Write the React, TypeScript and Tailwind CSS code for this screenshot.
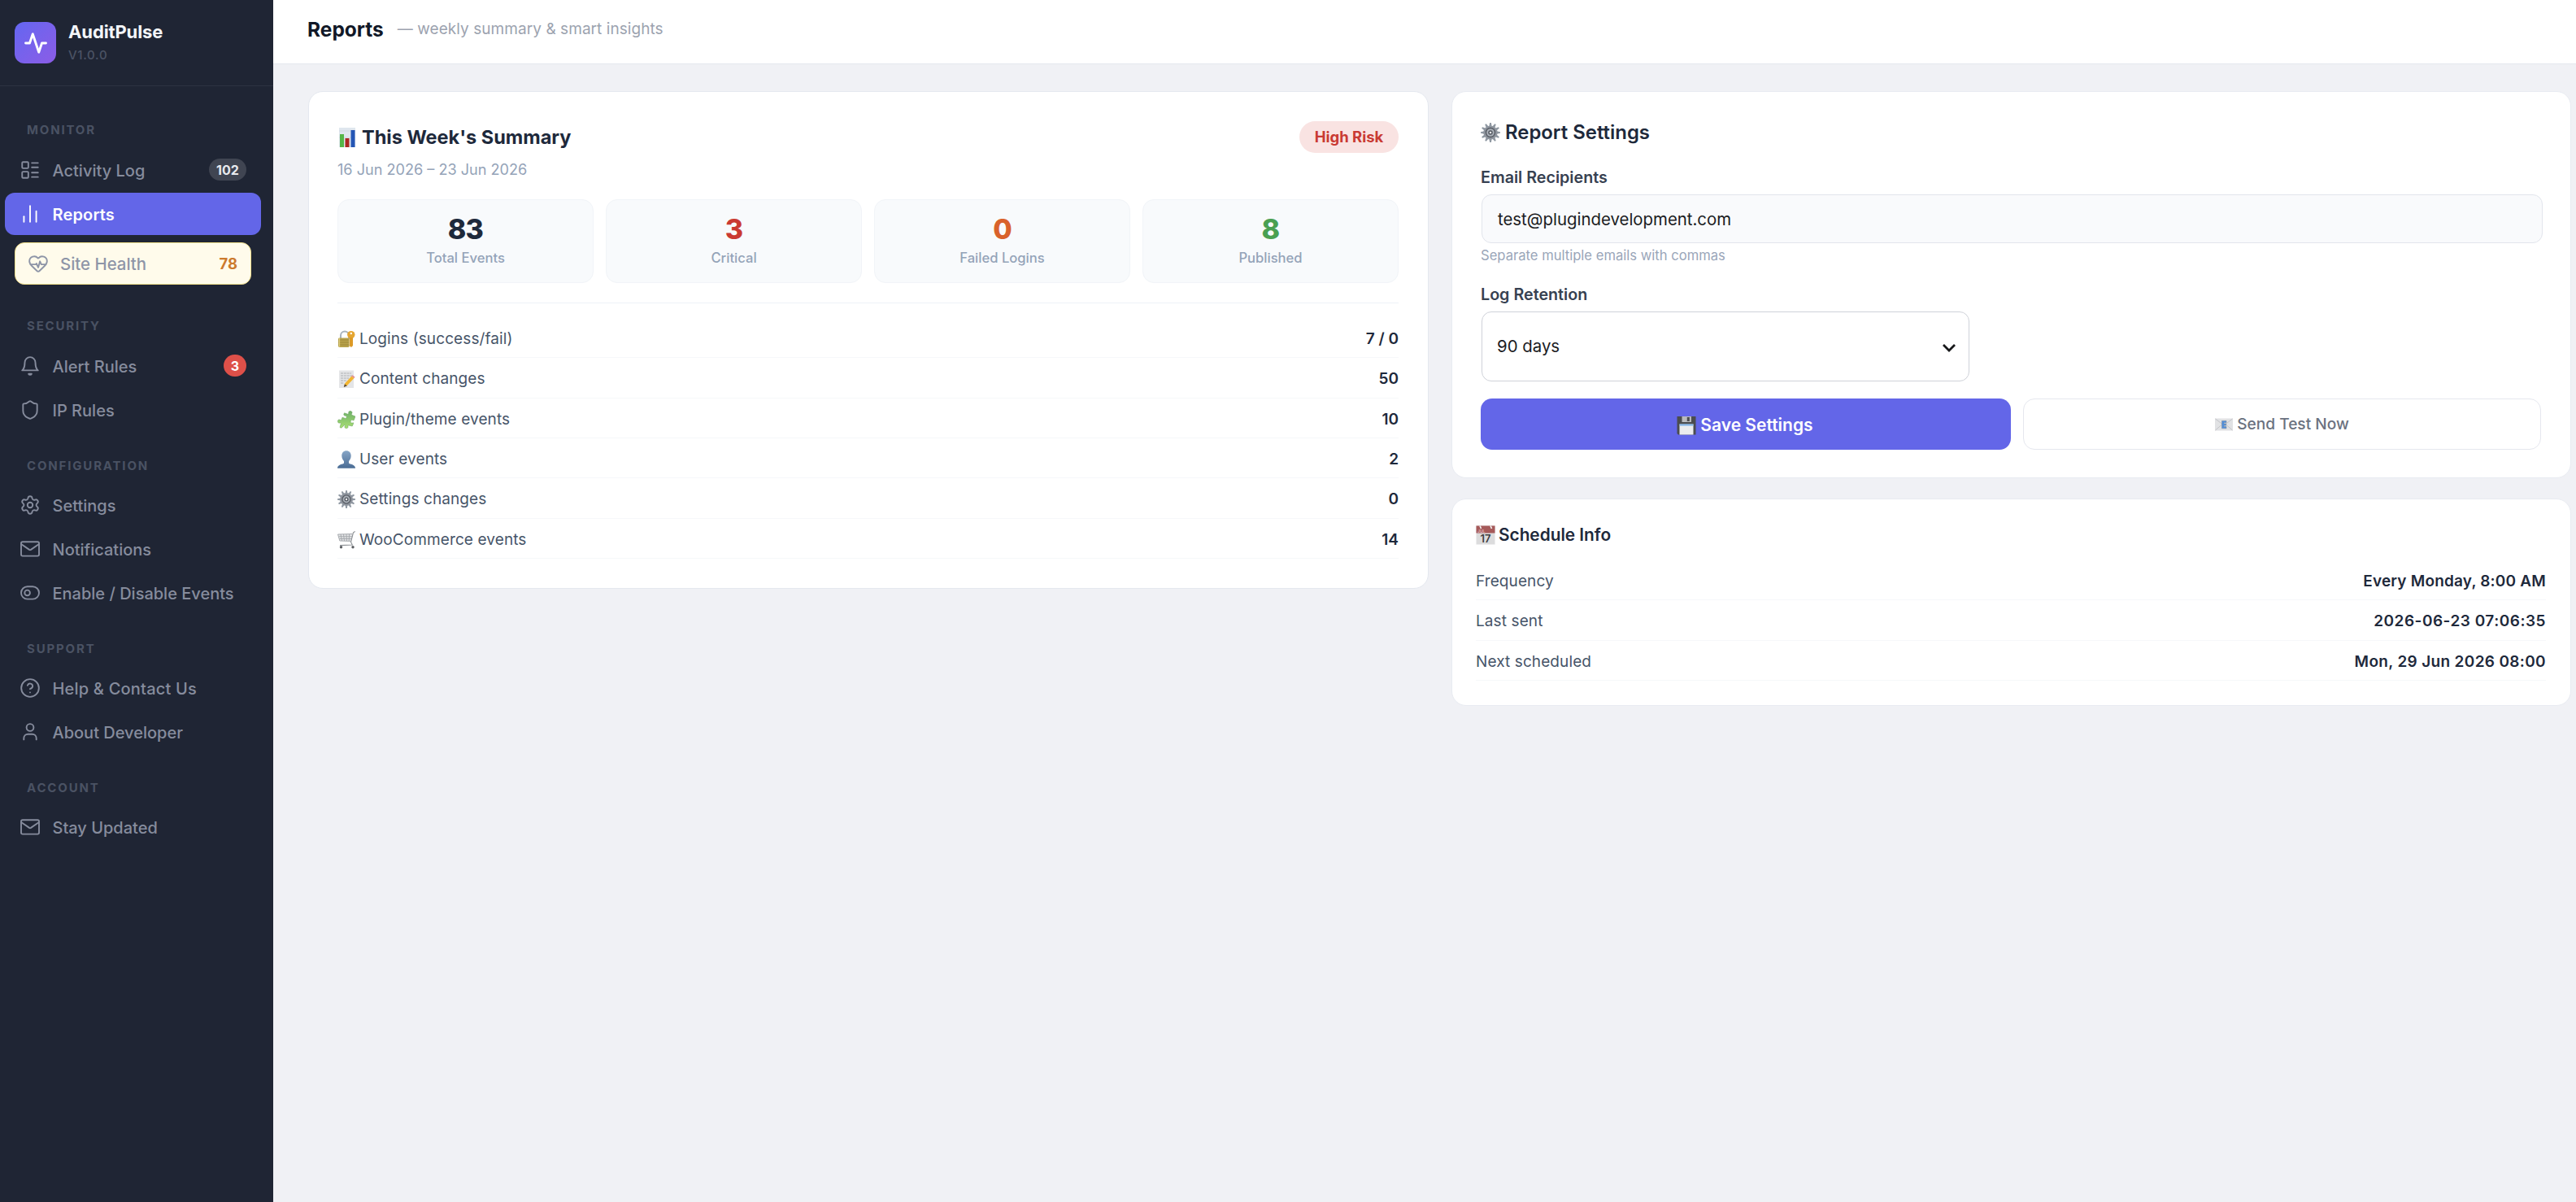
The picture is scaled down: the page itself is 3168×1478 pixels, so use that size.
import { ReactNode } from "react";
import clsx from "clsx";
import {
	ChartNoAxesColumn,
	HeartPulse,
	HelpCircle,
	LayoutList,
	Settings,
	Shield,
} from "lucide-react";

const lineIcon = {
	width: 26,
	height: 26,
	viewBox: "0 0 26 26",
	fill: "none",
	stroke: "currentColor",
	strokeWidth: 1.9,
	strokeLinecap: "round",
	strokeLinejoin: "round",
	className: "shrink-0",
} as const;

const lucideIcon = { size: 26, strokeWidth: 1.75, className: "shrink-0" };

function BellIcon() {
	return (
		<svg {...lineIcon} viewBox="0 0 24 24" strokeWidth={1.75}>
			<path d="M18 8A6 6 0 0 0 6 8c0 7-3 9-3 9h18s-3-2-3-9" />
			<path d="M13.73 21a2 2 0 0 1-3.46 0z" />
		</svg>
	);
}

function MailIcon() {
	return (
		<svg {...lineIcon}>
			<rect x="2" y="4.2" width="22" height="17.4" rx="1.8" />
			<path d="M2.4 7.2 12 13.9q1 .6 2 0l9.6-6.7" />
		</svg>
	);
}

function ToggleIcon() {
	return (
		<svg {...lineIcon}>
			<rect x="2" y="5.2" width="22" height="15.4" rx="7.7" />
			<circle cx="9.6" cy="12.9" r="3.3" />
		</svg>
	);
}

function UserIcon() {
	return (
		<svg {...lineIcon}>
			<circle cx="13" cy="7.5" r="4.4" />
			<path d="M5.3 22.4v-1.6a5 5 0 0 1 5-5h5.4a5 5 0 0 1 5 5v1.6" />
		</svg>
	);
}

function GearEmoji({ size = 22 }: Readonly<{ size?: number }>) {
	const teeth = Array.from({ length: 12 }, (_, i) => i * 30);
	return (
		<svg width={size} height={size} viewBox="0 0 22 22" className="shrink-0">
			{teeth.map((a) => (
				<path key={a} d="M10.2 0h1.6l.7 4h-3z" fill="#8f98a2" transform={`rotate(${a} 11 11)`} />
			))}
			<circle cx="11" cy="11" r="7.9" fill="#8f959e" />
			<circle cx="11" cy="11" r="5.7" fill="#565b63" />
			<circle cx="11" cy="11" r="4.4" fill="#a9afb7" />
			<circle cx="11" cy="11" r="2.5" fill="#51565e" />
			<circle cx="11" cy="11" r="1.2" fill="#eef0f3" />
		</svg>
	);
}

function ChartEmoji() {
	return (
		<svg width="24" height="24" viewBox="0 0 24 24" className="shrink-0">
			<rect x="2" width="20" height="24" fill="#dfe6ee" />
			<path d="M2 4h20M2 12h20" stroke="#cfd8e2" strokeWidth="1" />
			<rect x="3" y="8" width="5" height="16" fill="#55b548" />
			<rect x="9.5" y="13" width="5" height="11" fill="#ac2722" />
			<rect x="16.5" y="3" width="5" height="21" fill="#2456b5" />
		</svg>
	);
}

function LockEmoji() {
	return (
		<svg width="22" height="22" viewBox="0 0 22 22" className="shrink-0">
			<path d="M4 11V6.5a5 5 0 0 1 10 0V11" fill="none" stroke="#a9b4bd" strokeWidth="2" />
			<circle cx="16.8" cy="5.6" r="4.7" fill="#e5a631" />
			<path d="M15 9h4v10l-2 2-2-1.5z" fill="#dc9a27" />
			<circle cx="16.8" cy="4" r="1.2" fill="#fff" />
			<rect x="1" y="9.5" width="13.6" height="11.5" rx="1.4" fill="#b8a24b" />
			<path d="M1.5 12h12.6M1.5 15h12.6M1.5 18h12.6" stroke="#9b8637" strokeWidth=".9" />
			<path d="M2.5 10v10.5" stroke="#dccb7c" strokeWidth="1.2" />
		</svg>
	);
}

function MemoEmoji() {
	return (
		<svg width="22" height="22" viewBox="0 0 22 22" className="shrink-0">
			<rect x="2" y=".5" width="18" height="21.5" fill="#e4e5e7" />
			<path d="M4 4h13M4 7h14M4 10h10M4 13h7M4 16h4" stroke="#a7a9ad" strokeWidth=".9" strokeDasharray="3 .8" />
			<path d="m17.3 7.5 3.2 2.6-8.6 9-3.8 1.3 1-3.8z" fill="#f2b531" />
			<path d="m17.3 7.5 1.3-1.2 3 2.5-1.1 1.3z" fill="#e58a8f" />
			<path d="m8.9 17.2 3 2.4-4.1 1.4z" fill="#5b4a35" />
		</svg>
	);
}

function PuzzleEmoji() {
	return (
		<svg width="22" height="22" viewBox="0 0 22 22" className="shrink-0">
			<defs>
				<linearGradient id="puzzle" x1="0" y1="0" x2="0" y2="1">
					<stop offset="0" stopColor="#6fb069" />
					<stop offset="1" stopColor="#a8df72" />
				</linearGradient>
			</defs>
			<path
				d="M8.5 2.8 12.8 4.2C14.3 4.3 13.4 2.8 13.8 1.6 14.5-.2 18 .2 18 2.3c0 1.300-1.200 1.800-.4 3L22 7l-1.700 4.600c-1.100.9-1.800-.6-3.100-.2-1.700.8-1.300 3.300.4 3.700 1.200.2 1.700-.8 2.300.2L18.200 19l-4.500-1c-1.300.1-.4 1.400-.8 2.500-.8 1.900-3.900 1.500-4-.5 0-1.200 1.100-1.700.2-2.800L4.800 21.200 3 20.500l1.300-4.800c-.3-1.200-1.500-.2-2.600-.6-2.100-.8-1.800-3.900.3-4.200 1.200 0 1.700 1.200 2.700.5L6 8.200l3.700 1.200c1.500.1 2.200-2 .9-2.900-1.300-.5-2.700-.3-2.900-1.700z"
				fill="url(#puzzle)"
				stroke="#629c58"
				strokeWidth=".5"
			/>
		</svg>
	);
}

function PersonEmoji() {
	return (
		<svg width="22" height="22" viewBox="0 0 22 22" className="shrink-0">
			<defs>
				<linearGradient id="person" x1="0" y1="0" x2="0" y2="1">
					<stop offset="0" stopColor="#86a5c6" />
					<stop offset="1" stopColor="#4a6c94" />
				</linearGradient>
			</defs>
			<path
				d="M11 .3c3.5 0 5.7 2.5 5.7 6.1 0 3-1.3 5-2.7 6.6v2.6c1 1.5 8 1.3 8 6.2H0c0-4.9 7-4.7 8-6.2V13c-1.4-1.6-2.7-3.6-2.7-6.6C5.3 2.8 7.5.3 11 .3z"
				fill="url(#person)"
			/>
		</svg>
	);
}

function CartEmoji() {
	return (
		<svg width="22" height="22" viewBox="0 0 22 22" className="shrink-0" fill="none">
			<path d="M.5 4 18.5 3 16.5 12.5 2.8 12z" fill="#e3e4e6" />
			<path
				d="M.5 4 2.8 12l13.7.5M.5 4l18-.5M1.5 6.8h16.7M2.3 9.5h15M4 4l1.5 8M7.5 4l1 8M11 4l.4 8M14.5 4l-.3 8"
				stroke="#a2a5a9"
				strokeWidth=".9"
			/>
			<path d="M21.7.6 19.5 1.8 16.5 13.5 18.3 17 3 17.6" stroke="#8d9195" strokeWidth="1.1" />
			<circle cx="4.5" cy="19.8" r="1.7" fill="#5c5f63" />
			<circle cx="19" cy="19.8" r="1.7" fill="#5c5f63" />
		</svg>
	);
}

function FloppyEmoji() {
	return (
		<svg width="24" height="24" viewBox="0 0 24 24" className="shrink-0">
			<path d="M.5 1h23v22.5H2L.5 22z" fill="#4b4c4f" />
			<rect x="6.5" y="1" width="11.5" height="7" fill="#b9babd" />
			<rect x="12.8" y="2" width="3" height="5" fill="#4b4c4f" />
			<rect x="3.5" y="10.5" width="17" height="13" fill="#ececee" />
			<rect x="3.5" y="10.5" width="17" height="2" fill="#7fb2e8" />
		</svg>
	);
}

function EmailEmoji() {
	return (
		<svg width="22" height="16" viewBox="0 0 22 16" className="shrink-0">
			<rect y=".5" width="22" height="15" fill="#e1e2e4" />
			<path d="m.5 1 10.5 8L21.5 1M.5 15l8-7M21.5 15l-8-7" fill="none" stroke="#bfc1c5" strokeWidth=".9" />
			<path d="M8.5 3.5H14v2.3h-3V7h2.7v2.2H11v1.3h3v2.3H8.5z" fill="#4f8fdc" stroke="#7c8da3" strokeWidth=".6" />
		</svg>
	);
}

function CalendarEmoji() {
	return (
		<svg width="24" height="24" viewBox="0 0 24 24" className="shrink-0">
			<rect x=".5" y=".5" width="23" height="23" fill="#dcdcdd" />
			<rect x=".5" y=".5" width="23" height="9" fill="#a65a5a" />
			<path d="M5 .5 6.5 4M18 .5 19.5 4" stroke="#f3f3f3" strokeWidth="1.7" />
			<text x="2" y="8.6" fontSize="5" fill="#e2bcbc" fontFamily="Inter, sans-serif">
				JUL
			</text>
			<text x="12" y="21.3" fontSize="13" textAnchor="middle" fill="#3f3f41" fontFamily="Inter, sans-serif">
				17
			</text>
		</svg>
	);
}

type NavEntry = {
	label: string;
	icon: ReactNode;
	badge?: string;
	kind?: "active" | "health" | "alert";
};

const sections: { title: string; items: NavEntry[] }[] = [
	{
		title: "MONITOR",
		items: [
			{ label: "Activity Log", icon: <LayoutList {...lucideIcon} />, badge: "102" },
			{ label: "Reports", icon: <ChartNoAxesColumn {...lucideIcon} />, kind: "active" },
			{ label: "Site Health", icon: <HeartPulse {...lucideIcon} />, badge: "78", kind: "health" },
		],
	},
	{
		title: "SECURITY",
		items: [
			{ label: "Alert Rules", icon: <BellIcon />, badge: "3", kind: "alert" },
			{ label: "IP Rules", icon: <Shield {...lucideIcon} /> },
		],
	},
	{
		title: "CONFIGURATION",
		items: [
			{ label: "Settings", icon: <Settings {...lucideIcon} /> },
			{ label: "Notifications", icon: <MailIcon /> },
			{ label: "Enable / Disable Events", icon: <ToggleIcon /> },
		],
	},
	{
		title: "SUPPORT",
		items: [
			{ label: "Help & Contact Us", icon: <HelpCircle {...lucideIcon} /> },
			{ label: "About Developer", icon: <UserIcon /> },
		],
	},
	{
		title: "ACCOUNT",
		items: [{ label: "Stay Updated", icon: <MailIcon /> }],
	},
];

function NavItem({ label, icon, badge, kind }: Readonly<NavEntry>) {
	if (kind === "health") {
		return (
			<a className="mx-3 mt-[7px] mb-2 flex h-[52px] items-center gap-3.5 rounded-xl border border-[#f3e08c] bg-[#fffbeb] pr-4 pl-[15px] text-[#8e95a7]">
				{icon}
				<span className="pt-0.5 text-[20.4px] leading-6 font-medium">{label}</span>
				<span className="ml-auto text-[18.5px] leading-6 font-bold text-[#cc7a2d]">{badge}</span>
			</a>
		);
	}

	return (
		<a
			className={clsx(
				"flex items-center gap-3.5 rounded-xl px-[18px]",
				badge ? "h-[53px]" : "h-[52px]",
				kind === "active" ? "bg-[#6366e8] text-white" : "text-[#868c9d]"
			)}
		>
			{icon}
			<span
				className={clsx(
					"pt-[2px] pl-[0.5px] text-[20px] leading-6 whitespace-nowrap",
					kind === "active" ? "font-semibold tracking-[0.15px]" : "font-medium",
					label.startsWith("Help") && "tracking-[0.2px]"
				)}
			>
				{label}
			</span>
			{badge && (
				<span
					className={clsx(
						"ml-auto flex h-[27px] items-center justify-center rounded-full text-[16px] leading-none font-bold",
						kind === "alert" ? "w-7 bg-[#de5049] text-white" : "w-[46px] bg-[#404552] text-[#e8eaee]"
					)}
				>
					{badge}
				</span>
			)}
		</a>
	);
}

function Sidebar() {
	return (
		<aside className="w-[336px] shrink-0 bg-[#1f2534]">
			<div className="flex h-[106px] items-center gap-[15px] border-b border-[#2d3341] pl-[18px]">
				<div className="flex size-[51px] items-center justify-center rounded-xl bg-linear-to-br from-[#6366f1] to-[#8b5ce6]">
					<svg width="30" height="30" viewBox="0 0 24 24" fill="none" stroke="#fff" strokeWidth="2.3" strokeLinecap="round" strokeLinejoin="round">
						<polyline points="22 12 18 12 15 21 9 3 6 12 2 12" />
					</svg>
				</div>
				<div className="flex flex-col gap-1 pb-0.5">
					<span className="text-[22px] leading-7 font-bold tracking-[-0.12px] text-[#f3f5f9]">AuditPulse</span>
					<span className="text-[15px] leading-[22px] font-medium tracking-[0.7px] text-[#4b5364]">V1.0.0</span>
				</div>
			</div>
			<nav className="pt-[11px] pr-[15px] pl-1.5">
				{sections.map((section) => (
					<div key={section.title} className="flex flex-col gap-0.5">
						<h3 className="-mb-0.5 flex h-[65px] items-end pb-3 pl-[27px] text-[15px] leading-5 font-bold tracking-[1.83px] text-[#4a5263]">
							{section.title}
						</h3>
						{section.items.map((item) => (
							<NavItem key={item.label} {...item} />
						))}
					</div>
				))}
			</nav>
		</aside>
	);
}

const stats = [
	{ value: "83", label: "Total Events", color: "text-[#1e293b]" },
	{ value: "3", label: "Critical", color: "text-[#ca3a32]" },
	{ value: "0", label: "Failed Logins", color: "text-[#d9622b]" },
	{ value: "8", label: "Published", color: "text-[#4aa052]" },
];

const breakdown = [
	{ icon: <LockEmoji />, label: "Logins (success/fail)", value: "7 / 0" },
	{ icon: <MemoEmoji />, label: "Content changes", value: "50" },
	{ icon: <PuzzleEmoji />, label: "Plugin/theme events", value: "10" },
	{ icon: <PersonEmoji />, label: "User events", value: "2" },
	{ icon: <GearEmoji />, label: "Settings changes", value: "0" },
	{ icon: <CartEmoji />, label: "WooCommerce events", value: "14" },
];

const schedule = [
	{ label: "Frequency", value: "Every Monday, 8:00 AM", tracking: "tracking-[0.19px]" },
	{ label: "Last sent", value: "2026-06-23 07:06:35", tracking: "tracking-[0.5px]" },
	{ label: "Next scheduled", value: "Mon, 29 Jun 2026 08:00", tracking: "tracking-[0.34px]" },
];

function Row({
	icon,
	label,
	value,
	tracking,
}: Readonly<{ icon?: ReactNode; label: string; value: string; tracking?: string }>) {
	return (
		<div className="flex h-[49.33px] items-center justify-between border-b border-[#f6f8fa] pt-1 text-[19px] leading-6">
			<span className="flex items-center gap-[5px] tracking-[0.1px] text-[#475569]">
				{icon}
				{label}
			</span>
			<span className={clsx("font-semibold text-[#1e293b]", tracking)}>{value}</span>
		</div>
	);
}

function SummaryCard() {
	return (
		<section className="h-[612px] w-[1378px] rounded-[18px] border border-[#e4e8ef] bg-white pt-9 pr-9 pl-[35px]">
			<div className="flex h-[39px] items-center justify-between">
				<h2 className="flex items-center gap-1.5 text-[23.5px] leading-7 font-bold text-[#1e293b]">
					<ChartEmoji />
					This Week's Summary
				</h2>
				<span className="flex h-[39px] w-[122px] items-center justify-center rounded-full bg-[#f9e3e2] text-[18.5px] leading-none font-bold text-[#c93a33]">
					High Risk
				</span>
			</div>
			<p className="mt-2 text-[18.1px] leading-6 text-[#94a3b8]">16 Jun 2026 – 23 Jun 2026</p>
			<div className="mt-[25px] grid grid-cols-4 gap-[15px]">
				{stats.map((stat) => (
					<div
						key={stat.label}
						className="flex h-[103px] flex-col items-center rounded-[14px] border border-[#f1f4f8] bg-[#f8fafc] pt-4"
					>
						<span className={clsx("text-[34px] leading-10 font-extrabold tracking-[-0.8px]", stat.color)}>{stat.value}</span>
						<span className="mt-1 text-[16.6px] leading-[22px] font-medium text-[#94a3b8]">{stat.label}</span>
					</div>
				))}
			</div>
			<div className="mt-6 border-t border-[#eef2f7] pt-[18px]">
				{breakdown.map((row) => (
					<Row key={row.label} {...row} />
				))}
			</div>
		</section>
	);
}

function SettingsCard() {
	return (
		<section className="h-[476px] rounded-[18px] border border-[#e8ebf1] bg-white px-[35px] pt-9">
			<h2 className="flex h-7 items-center gap-1.5 text-[23.9px] leading-7 font-semibold text-[#1e293b]">
				<GearEmoji size={24} />
				Report Settings
			</h2>
			<label className="mt-[29px] block text-[19.7px] leading-6 font-semibold text-[#374151]">Email Recipients</label>
			<div className="mt-[9px] mr-[-1px] ml-px flex h-[60px] items-center rounded-xl border border-[#e2e5ec] bg-[#f9fafc] pt-0.5 pl-[19px] text-[20.4px] leading-none text-[#1b1c1f]">
				test@plugindevelopment.com
			</div>
			<p className="mt-1 text-[16.6px] leading-[22px] text-[#9aa6b9]">Separate multiple emails with commas</p>
			<label className="mt-[25px] block text-[19.7px] leading-6 font-semibold text-[#374151]">Log Retention</label>
			<div className="mt-[9px] ml-px flex h-[86px] w-[600px] items-center justify-between rounded-xl border border-[#cfd2d9] pr-[15px] pl-[18px] text-[20.4px] leading-none text-[#1b1c1f]">
				90 days
				<svg width="18" height="12" viewBox="0 0 18 12" fill="none" stroke="#17181a" strokeWidth="2.8" className="mt-1">
					<path d="m2 2 7 7 7-7" />
				</svg>
			</div>
			<div className="mt-[21px] flex h-[63px] gap-[15px]">
				<button className="flex w-[652px] items-center justify-center gap-[5px] rounded-[14px] bg-[#6366e8] pt-0.5 pr-0.5 text-[21px] leading-none font-semibold text-white">
					<FloppyEmoji />
					Save Settings
				</button>
				<button className="flex w-[637px] items-center justify-center gap-[5px] rounded-[14px] border border-[#e5e7ee] pt-px text-[19.1px] leading-none font-medium text-[#6b7280]">
					<EmailEmoji />
					Send Test Now
				</button>
			</div>
		</section>
	);
}

function ScheduleCard() {
	return (
		<section className="h-[255px] rounded-[18px] border border-[#e8ebf1] bg-white pt-[30px] pr-[30px] pl-[29px]">
			<h2 className="flex h-7 items-center gap-1 text-[20.8px] leading-7 font-semibold text-[#1e293b]">
				<CalendarEmoji />
				Schedule Info
			</h2>
			<div className="mt-[17px]">
				{schedule.map((row) => (
					<Row key={row.label} {...row} />
				))}
			</div>
		</section>
	);
}

export default function App() {
	return (
		<div className="flex h-[1478px] w-[3168px] overflow-hidden bg-[#f0f1f5] font-['Inter','Liberation_Sans',sans-serif]">
			<Sidebar />
			<main className="flex-1">
				<header className="flex h-[79px] items-center gap-[17px] border-b border-[#e4e8ee] bg-white pb-[7px] pl-[42px]">
					<h1 className="text-[24.5px] leading-8 font-bold text-[#111827]">Reports</h1>
					<span className="text-[19px] leading-8 tracking-[0.06px] text-[#9ca3af]">— weekly summary &amp; smart insights</span>
				</header>
				<div className="flex items-start gap-7 pt-[33px] pl-[43px]">
					<SummaryCard />
					<div className="flex w-[1377px] flex-col gap-[25px]">
						<SettingsCard />
						<ScheduleCard />
					</div>
				</div>
			</main>
		</div>
	);
}
